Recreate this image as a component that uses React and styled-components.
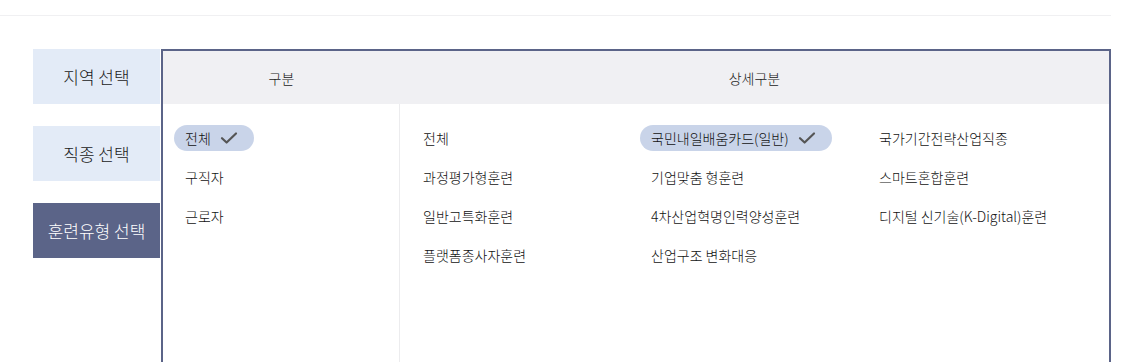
import React, { useState } from "react";
import styled, { createGlobalStyle } from "styled-components";

const GlobalStyle = createGlobalStyle`
  * { box-sizing: border-box; }
  body {
    margin: 0;
    background: #fff;
    font-family: "Noto Sans CJK KR", "Noto Sans", sans-serif;
    color: #1a1a1a;
  }
`;

const TopBar = styled.div`
  width: 1111px;
  height: 16px;
  border-bottom: 1px solid #f0f0f2;
`;

const Main = styled.div`
  display: flex;
  padding: 33px 0 0 33px;
`;

const TabList = styled.div`
  display: flex;
  flex-direction: column;
  gap: 22px;
  width: 127px;
  margin-right: 1px;
`;

const Tab = styled.button`
  height: 55px;
  border: 0;
  padding: 0;
  font-family: inherit;
  font-size: 17px;
  font-weight: 300;
  background: ${(p) => (p.$active ? "#5b6488" : "#e3ebf7")};
  color: ${(p) => (p.$active ? "#ffffff" : "#1a1a1a")};
  cursor: pointer;
  display: flex;
  align-items: center;
  justify-content: center;
`;

const Panel = styled.div`
  width: 950px;
  height: 330px;
  border: 2px solid #5b6488;
  display: flex;
  flex-direction: column;
`;

const Header = styled.div`
  display: flex;
  height: 53px;
  background: #f0f0f3;
  font-size: 14px;
  font-weight: 300;
  color: #1a1a1a;
`;

const HeaderCell = styled.div`
  display: flex;
  align-items: center;
  justify-content: center;
  ${(p) => (p.$grow ? "flex: 1;" : `width: ${p.$width}px;`)}
`;

const Body = styled.div`
  display: flex;
  flex: 1;
`;

const LeftCol = styled.div`
  width: 237px;
  border-right: 1px solid #ececee;
  padding: 21px 11px;
  display: flex;
  flex-direction: column;
  align-items: flex-start;
  gap: 13px;
`;

const RightCol = styled.div`
  flex: 1;
  padding: 21px 12px;
  display: grid;
  grid-template-columns: repeat(3, 228px);
  row-gap: 13px;
  align-content: start;
  justify-items: start;
`;

const Option = styled.button`
  height: 26px;
  border: 0;
  border-radius: 13px;
  padding: ${(p) => (p.$selected ? "0 16px 0 11px" : "0 11px")};
  display: inline-flex;
  align-items: center;
  gap: 9px;
  font-family: inherit;
  font-size: 14px;
  font-weight: 300;
  color: #111;
  background: ${(p) => (p.$selected ? "#c9d4e9" : "transparent")};
  cursor: pointer;
  white-space: nowrap;
`;

const CheckIcon = () => (
  <svg width="18" height="14" viewBox="0 0 18 14" fill="none">
    <path
      d="M2 7.2 L6.6 11.5 L16 2.5"
      stroke="#555"
      strokeWidth="2.2"
      strokeLinecap="round"
      strokeLinejoin="round"
    />
  </svg>
);

const tabs = ["지역 선택", "직종 선택", "훈련유형 선택"];
const categories = ["전체", "구직자", "근로자"];
const details = [
  "전체",
  "국민내일배움카드(일반)",
  "국가기간전략산업직종",
  "과정평가형훈련",
  "기업맞춤 형훈련",
  "스마트혼합훈련",
  "일반고특화훈련",
  "4차산업혁명인력양성훈련",
  "디지털 신기술(K-Digital)훈련",
  "플랫폼종사자훈련",
  "산업구조 변화대응",
];

export default function App() {
  const [tab, setTab] = useState(2);
  const [cat, setCat] = useState(0);
  const [detail, setDetail] = useState(1);

  return (
    <>
      <GlobalStyle />
      <TopBar />
      <Main>
        <TabList>
          {tabs.map((t, i) => (
            <Tab key={t} $active={tab === i} onClick={() => setTab(i)}>
              {t}
            </Tab>
          ))}
        </TabList>
        <Panel>
          <Header>
            <HeaderCell $width={237}>구분</HeaderCell>
            <HeaderCell $grow>상세구분</HeaderCell>
          </Header>
          <Body>
            <LeftCol>
              {categories.map((c, i) => (
                <Option key={c} $selected={cat === i} onClick={() => setCat(i)}>
                  {c}
                  {cat === i && <CheckIcon />}
                </Option>
              ))}
            </LeftCol>
            <RightCol>
              {details.map((d, i) => (
                <Option key={d} $selected={detail === i} onClick={() => setDetail(i)}>
                  {d}
                  {detail === i && <CheckIcon />}
                </Option>
              ))}
            </RightCol>
          </Body>
        </Panel>
      </Main>
    </>
  );
}
